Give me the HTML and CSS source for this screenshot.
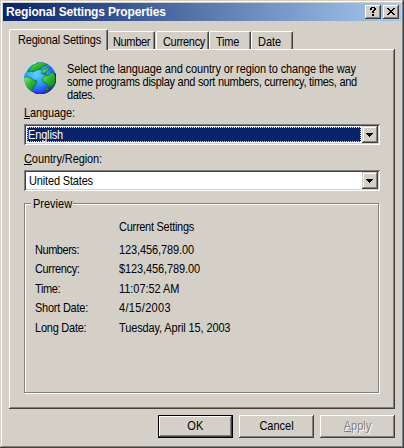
FILE: index.html
```html
<!DOCTYPE html>
<html lang="en">
<head>
<meta charset="utf-8">
<title>Regional Settings Properties</title>
<link rel="stylesheet" href="styles.css">
</head>
<body>
<div class="window">
  <div class="titlebar">
    <span class="title">Regional Settings Properties</span>
    <button class="caption-btn" aria-label="Help"><svg width="16" height="14" shape-rendering="crispEdges"><path d="M6 2h4v1H6zM5 3h2v2H5zM9 3h2v2H9zM8 5h2v1H8zM7 6h2v2H7zM7 9h2v2H7z"/></svg></button>
    <button class="caption-btn close" aria-label="Close"><svg width="16" height="14" shape-rendering="crispEdges"><path d="M4 3h2v1H4zM10 3h2v1h-2zM5 4h2v1H5zM9 4h2v1H9zM6 5h4v1H6zM7 6h2v1H7zM6 7h4v1H6zM5 8h2v1H5zM9 8h2v1H9zM4 9h2v1H4zM10 9h2v1h-2z"/></svg></button>
  </div>
  <div class="tabs">
    <div class="tab active"><span class="t s-regional">Regional Settings</span></div>
    <div class="tab number"><span class="t s-number">Number</span></div>
    <div class="tab currency"><span class="t s-currency">Currency</span></div>
    <div class="tab time"><span class="t s-time">Time</span></div>
    <div class="tab date"><span class="t">Date</span></div>
  </div>
  <div class="page">
    <div class="intro">
      <svg class="globe" width="32" height="32" viewBox="0 0 32 32">
        <defs>
          <radialGradient id="sea" cx="38%" cy="35%" r="70%"><stop offset="0" stop-color="#5fd4ff"/><stop offset=".5" stop-color="#2a9cff"/><stop offset=".8" stop-color="#2a50ff"/><stop offset="1" stop-color="#2020c0"/></radialGradient>
          <linearGradient id="land" x1="0" y1="0" x2="1" y2="1"><stop offset="0" stop-color="#7cf07c"/><stop offset=".5" stop-color="#2fb42f"/><stop offset="1" stop-color="#0a7a10"/></linearGradient>
          <clipPath id="disc"><circle cx="16" cy="16" r="15.8"/></clipPath>
        </defs>
        <circle cx="16" cy="16" r="15.8" fill="url(#sea)"/>
        <g clip-path="url(#disc)" fill="url(#land)" stroke="#0a6418" stroke-width=".6">
          <path d="M5 8L9 3l7-3 6 1 1 2-4 1-2 3-4 1-4 2-3-1-2 1z"/>
          <path d="M0 15l4 0 3 1 2 2 4 1-1 4-3 2-1 3 1 2-3-1-4-5-3-5z"/>
          <path d="M21 14l4-1 3-3 3 2 1 9-4 4-4-1-2-3-3-1-1-3z"/>
          <path d="M17 8l4-1 3-2 2 2-2 1-2 2-4 2-1-1 2-1zM19 12l3-1 1 1-3 1zM22 26l2-1 1 2-2 2-2-1z"/>
        </g>
        <path d="M1 11Q4 3 12 1" fill="none" stroke="#b4ffd0" stroke-width="1"/>
        <path d="M31 11A15.5 15.5 0 0 1 10 30.500" fill="none" stroke="#0a2460" stroke-width="1"/>
      </svg>
      <div class="description">
        <span class="t s-d1">Select the language and country or region to change the way</span>
        <span class="t s-d2">some programs display and sort numbers, currency, times, and</span>
        <span class="t s-d3">dates.</span>
      </div>
    </div>
    <div class="label"><span class="t s-language"><u>L</u>anguage:</span></div>
    <div class="combo">
      <div class="value selected"><span class="t s-english">English</span></div>
      <button class="drop" aria-label="Open"><svg width="16" height="17" shape-rendering="crispEdges"><path d="M4 7h7v1H4zM5 8h5v1H5zM6 9h3v1H6zM7 10h1v1H7z"/></svg></button>
    </div>
    <div class="label country"><span class="t s-country"><u>C</u>ountry/Region:</span></div>
    <div class="combo">
      <div class="value"><span class="t s-us">United States</span></div>
      <button class="drop" aria-label="Open"><svg width="16" height="17" shape-rendering="crispEdges"><path d="M4 7h7v1H4zM5 8h5v1H5zM6 9h3v1H6zM7 10h1v1H7z"/></svg></button>
    </div>
    <div class="group">
      <div class="legend"><span class="t">Preview</span></div>
      <div class="preview">
        <span></span><span class="t s-current">Current Settings</span>
        <span class="t s-numbers">Numbers:</span><span class="t s-n">123,456,789.00</span>
        <span class="t s-curr">Currency:</span><span class="t s-c">$123,456,789.00</span>
        <span class="t s-tm">Time:</span><span class="t s-tv">11:07:52 AM</span>
        <span class="t s-sd">Short Date:</span><span class="t s-sv">4/15/2003</span>
        <span class="t s-ld">Long Date:</span><span class="t s-lv">Tuesday, April 15, 2003</span>
      </div>
    </div>
  </div>
  <div class="buttons">
    <button class="btn default"><span class="t s-ok">OK</span></button>
    <button class="btn"><span class="t">Cancel</span></button>
    <button class="btn disabled" disabled><span class="t"><u>A</u>pply</span></button>
  </div>
</div>
</body>
</html>
```
FILE: styles.css
```css
* { box-sizing: border-box; }
body { margin: 0; background: #d4d0c8; font: 11px/13px "Liberation Sans", Arial, sans-serif; color: #000; }
button { font: inherit; color: inherit; margin: 0; padding: 0; border: 0; background: #d4d0c8; }
svg { display: block; }
u { text-decoration: none; box-shadow: 0 -1px 0 #000 inset; display: inline-block; height: 12px; vertical-align: top; }

.window { width: 404px; height: 448px; padding: 3px; background: #d4d0c8; box-shadow: inset -1px -1px #404040, inset 1px 1px #d4d0c8, inset -2px -2px #808080, inset 2px 2px #fff; }

/* Tall, narrow interface lettering */
.t { display: block; height: 13px; white-space: nowrap; transform: scaleY(1.12); transform-origin: 0 10px; }

.titlebar { display: flex; align-items: center; height: 18px; padding: 0 2px 0 3px; background: linear-gradient(90deg, #0a246a, #a6caf0); }
.title { flex: 1; color: #fff; font-size: 12px; font-weight: bold; letter-spacing: -.15px; white-space: nowrap; }
.caption-btn { width: 16px; height: 14px; box-shadow: inset -1px -1px #404040, inset 1px 1px #fff, inset -2px -2px #808080; }
.close { margin-left: 2px; }

.tabs { display: flex; align-items: flex-end; height: 20px; margin: 8px 6px 0; }
.tab { position: relative; height: 18px; padding: 4px 0 0 6px; border-top: 1px solid #fff; border-left: 1px solid #fff; border-right: 1px solid #404040; border-radius: 2px 2px 0 0; box-shadow: inset -1px 0 #808080; background: #d4d0c8; }
.tab.active { z-index: 1; width: 99px; height: 21px; margin-bottom: -1px; padding: 4px 0 0 8px; }
.tab.number { width: 47px; margin-right: 1px; padding-left: 5px; border-left: 0; }
.tab.currency { width: 53px; }
.tab.time { width: 42px; }
.tab.date { width: 42px; }

.page { height: 360px; margin: 0 6px; padding: 13px 15px 0; box-shadow: inset -1px -1px #404040, inset 1px 1px #fff, inset -2px -2px #808080; }
.intro { display: flex; height: 45px; gap: 11px; }
.description { padding-top: 1px; }
.label { height: 17px; }
.label.country { margin-top: 8px; }

.combo { display: flex; width: 356px; height: 21px; padding: 2px; background: #fff; box-shadow: inset 1px 1px #808080, inset -1px -1px #fff, inset 2px 2px #404040, inset -2px -2px #d4d0c8; }
.value { flex: 1; margin: 1px; padding: 2px 0 0 1px; }
.value:not(.selected) { padding-left: 2px; }
.selected { color: #fff; background: #0a246a; outline: 1px dotted #f5db95; outline-offset: -1px; }
.drop { width: 16px; height: 17px; box-shadow: inset -1px -1px #404040, inset 1px 1px #d4d0c8, inset -2px -2px #808080, inset 2px 2px #fff; }

.group { width: 355px; height: 190px; margin-top: 12px; border: 1px solid #808080; box-shadow: 1px 1px #fff, inset 1px 1px #fff; }
.legend { width: 42px; height: 13px; margin: -6px 0 0 6px; padding-left: 2px; background: #d4d0c8; }
.preview { display: grid; grid-template-columns: 84px 1fr; grid-template-rows: 23px 19px 20px 19px 20px 13px; margin: 10px 0 0 10px; }

.buttons { display: flex; justify-content: flex-end; gap: 6px; margin: 6px 6px 0; }
.btn { display: flex; justify-content: center; width: 75px; height: 23px; padding-top: 5px; box-shadow: inset -1px -1px #404040, inset 1px 1px #fff, inset -2px -2px #808080; }
.default { box-shadow: inset 0 0 0 1px #000, inset -2px -2px #404040, inset 2px 2px #fff, inset -3px -3px #808080; }
.disabled { color: #808080; text-shadow: 1px 1px #fff; }
.disabled u { box-shadow: 0 -1px 0 #808080 inset; }

.s-regional { letter-spacing: -.19px; }
.s-sv { letter-spacing: .34px; }
.s-number { letter-spacing: -.35px; }
.s-currency { letter-spacing: -.33px; }
.s-time { letter-spacing: -.26px; }
.s-d1, .s-lv { letter-spacing: -.13px; }
.s-d2 { letter-spacing: -.28px; }
.s-d3 { letter-spacing: -.33px; }
.s-language, .s-c { letter-spacing: -.11px; }
.s-country, .s-n { letter-spacing: -.1px; }
.s-english { letter-spacing: -.15px; }
.s-us { letter-spacing: -.16px; }
.s-current { letter-spacing: -.28px; }
.s-numbers { letter-spacing: -.46px; }
.s-curr { letter-spacing: -.35px; }
.s-tm { letter-spacing: -.4px; }
.s-tv { letter-spacing: -.05px; }
.s-sd, .s-ld { letter-spacing: -.24px; }
.s-ok { letter-spacing: .4px; }
```
